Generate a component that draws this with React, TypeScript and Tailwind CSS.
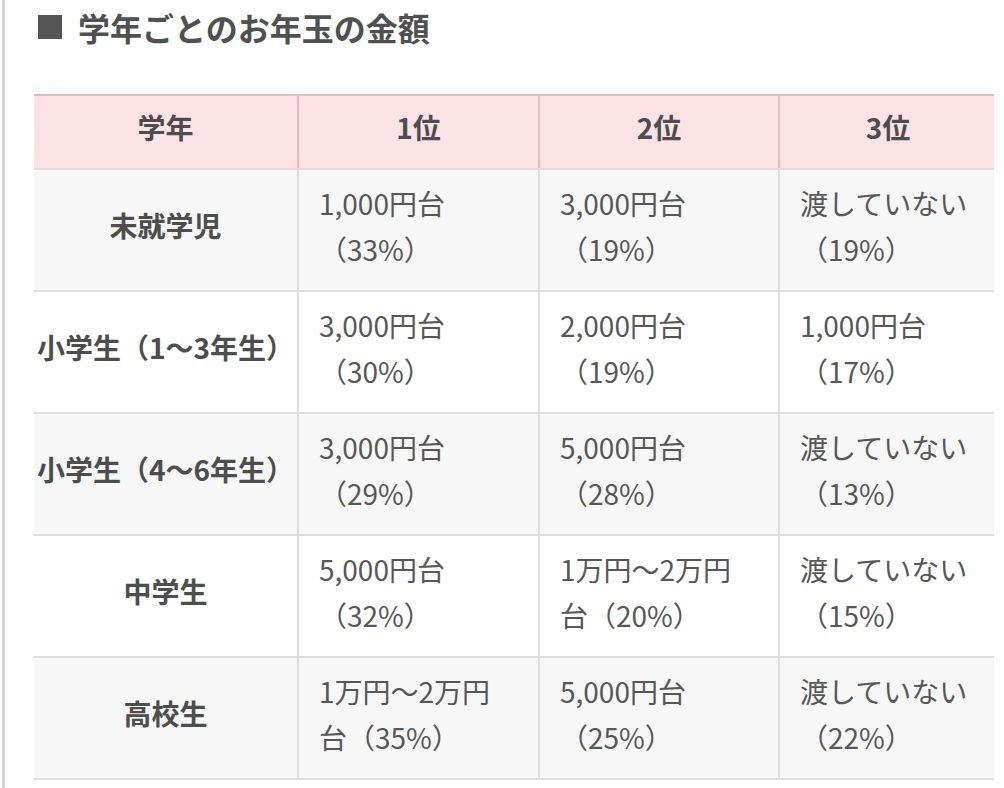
import React from 'react';

interface Row {
  grade: string;
  ranks: string[][];
}

// 各セルは参照画像どおりの改行位置で2行に分けておく
const rows: Row[] = [
  { grade: '未就学児', ranks: [['1,000円台', '（33%）'], ['3,000円台', '（19%）'], ['渡していない', '（19%）']] },
  { grade: '小学生（1〜3年生）', ranks: [['3,000円台', '（30%）'], ['2,000円台', '（19%）'], ['1,000円台', '（17%）']] },
  { grade: '小学生（4〜6年生）', ranks: [['3,000円台', '（29%）'], ['5,000円台', '（28%）'], ['渡していない', '（13%）']] },
  { grade: '中学生', ranks: [['5,000円台', '（32%）'], ['1万円〜2万円', '台（20%）'], ['渡していない', '（15%）']] },
  { grade: '高校生', ranks: [['1万円〜2万円', '台（35%）'], ['5,000円台', '（25%）'], ['渡していない', '（22%）']] },
];

const font = { fontFamily: '"Noto Sans CJK JP", "Noto Sans", sans-serif' };

export default function App() {
  return (
    <div className="min-h-screen bg-white" style={font}>
      <div className="ml-[2px] min-h-screen border-l-[3px] border-[#dcd2d6]">
        <h2 className="flex items-center pl-[33px] pt-[4px] text-[32px] font-bold leading-[46px] text-[#505050]">
          <span className="mr-[16px] inline-block h-[24px] w-[24px] bg-[#555]" />
          学年ごとのお年玉の金額
        </h2>
        <div className="mt-[44px] ml-[29px] w-[960px] overflow-hidden">
          <table className="w-[964px] table-fixed border-collapse text-[28px] text-[#575757]">
            <colgroup>
              <col className="w-[264px]" />
              <col className="w-[241px]" />
              <col className="w-[240px]" />
              <col />
            </colgroup>
            <thead>
              <tr className="h-[74px] bg-[#fde3e5]">
                {['学年', '1位', '2位', '3位'].map((h) => (
                  <th
                    key={h}
                    className="border-t-2 border-r-2 border-b-2 border-t-[#f0b4bb] border-r-[#f0b4bb] border-b-[#dedede] pb-[10px] text-center font-bold text-[#4d4d4d]"
                  >
                    {h}
                  </th>
                ))}
              </tr>
            </thead>
            <tbody>
              {rows.map((row, i) => (
                <tr key={row.grade} className={i % 2 === 0 ? 'h-[122px] bg-[#f7f7f7]' : 'h-[122px] bg-white'}>
                  <td className="whitespace-nowrap border-r-2 border-b-2 border-[#dedede] px-0 pb-[10px] text-center font-bold text-[#4d4d4d]">
                    {row.grade}
                  </td>
                  {row.ranks.map((lines, j) => (
                    <td key={j} className="whitespace-nowrap border-r-2 border-b-2 border-[#dedede] px-5 pb-[8px] leading-[46px]">
                      {lines[0]}
                      <br />
                      {lines[1]}
                    </td>
                  ))}
                </tr>
              ))}
            </tbody>
          </table>
        </div>
      </div>
    </div>
  );
}
